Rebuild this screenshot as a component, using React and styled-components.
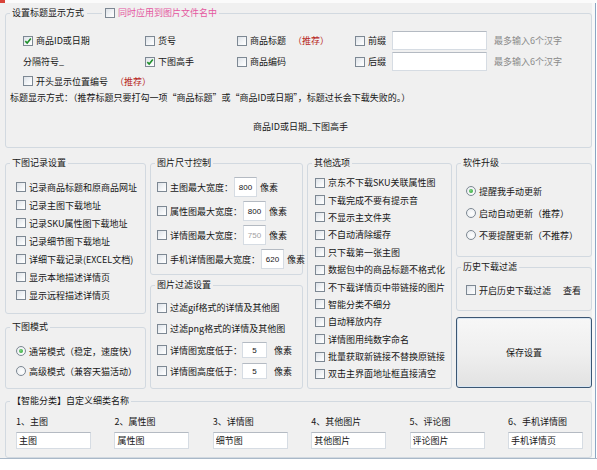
import styled, { createGlobalStyle } from "styled-components";

const GlobalStyle = createGlobalStyle`
  html, body {
    margin: 0;
    padding: 0;
    background: #fff;
  }
  body {
    font-family: "Noto Sans CJK SC", "Liberation Sans", sans-serif;
    font-size: 9px;
    color: #161616;
  }
  #root {
    width: 597px;
    height: 470px;
    overflow: hidden;
  }
`;

const Window = styled.div`
  width: 597px;
  height: 470px;
  display: flex;
  flex-direction: column;
  background: #fbfbfb;
`;

const TopBar = styled.div`
  height: 3px;
  flex: none;
  display: flex;

  span {
    width: 5px;
    background: #d9443a;
  }
`;

const Body = styled.div`
  flex: 1;
  display: flex;
  min-height: 0;
`;

const Main = styled.div`
  width: 592px;
  box-sizing: border-box;
  padding: 3px 0 0 5px;
  background: #f0f0f0;
  display: flex;
  flex-direction: column;
`;

const Edge = styled.div`
  width: 5px;
  box-sizing: border-box;
  background: #f8f8f8;
  border-right: 1px solid #fff;
  box-shadow: inset -1px 0 0 #8aa6c4;
`;

const Footer = styled.div`
  height: 12px;
  flex: none;
  background: #fff;
  border-top: 1px solid #a9b8c8;
  box-sizing: border-box;
`;

const Group = styled.fieldset`
  margin: ${(p) => p.$mt || 0}px 0 0 0;
  padding: 0;
  min-width: 0;
  box-sizing: border-box;
  height: ${(p) => p.$h}px;
  flex: none;
  border: 1px solid #d2d9e0;
  border-radius: 3px;
`;

const Legend = styled.legend`
  margin-left: 4px;
  padding: 0 2px;
  height: 14px;
  line-height: 14px;
  display: flex;
  align-items: center;
  white-space: nowrap;
`;

const LegendRule = styled.span`
  width: 15px;
  height: 1px;
  background: #d2d9e0;
  margin: 0 3px 0 3px;
`;

const Inner = styled.div`
  padding: ${(p) => p.$pad};
  display: flex;
  flex-direction: column;
`;

const Row = styled.div`
  height: ${(p) => p.$h}px;
  display: flex;
  align-items: center;
  padding-left: ${(p) => p.$indent || 0}px;
  white-space: nowrap;
`;

const Opt = styled.label`
  display: inline-flex;
  align-items: center;
  gap: 3px;
  flex: none;
  width: ${(p) => (p.$w ? `${p.$w}px` : "auto")};
  white-space: nowrap;
`;

const Cell = styled.span`
  flex: none;
  width: ${(p) => p.$w}px;
`;

const Box = styled.span`
  width: 10px;
  height: 10px;
  flex: none;
  box-sizing: border-box;
  border: 1px solid #7d8893;
  background: linear-gradient(135deg, #dde2e8 0%, #f4f6f8 60%, #ffffff 100%);
  display: inline-flex;
  align-items: center;
  justify-content: center;
`;

const RadioBox = styled(Box)`
  border-radius: 50%;
  background: radial-gradient(circle at 60% 60%, #ffffff 0%, #e4e8ec 100%);
`;

const Dot = styled.span`
  width: 4px;
  height: 4px;
  border-radius: 50%;
  background: radial-gradient(circle at 40% 40%, #7ed77e 0%, #1f9a2c 100%);
`;

function Check({ checked }) {
  return (
    <Box>
      {checked && (
        <svg width="8" height="8" viewBox="0 0 8 8">
          <path d="M1.3 4.1 L3.2 6 L6.8 1.6" fill="none" stroke="#1e8f2a" strokeWidth="1.6" />
        </svg>
      )}
    </Box>
  );
}

function Radio({ checked }) {
  return <RadioBox>{checked && <Dot />}</RadioBox>;
}

const Pink = styled.span`
  color: #e4579f;
`;

const Red = styled.span`
  color: #b8281f;
  margin-left: ${(p) => p.$ml || 0}px;
`;

const Hint = styled.span`
  color: #8a8a8a;
  margin-left: 7px;
`;

const Field = styled.input`
  width: ${(p) => p.$w}px;
  height: ${(p) => p.$h || 19}px;
  box-sizing: border-box;
  flex: none;
  margin: 0 0 0 ${(p) => p.$ml || 0}px;
  padding: 0 2px;
  border: 1px solid #d6dce3;
  border-top-color: #b4bac2;
  background: #fff;
  font-family: inherit;
  font-size: 9px;
  color: #161616;
  text-align: ${(p) => p.$align || "left"};
  outline: none;

  &:disabled {
    color: #a2a2a2;
  }
`;

const NumBox = styled(Field)`
  font-family: "Liberation Sans", sans-serif;
  font-size: 8px;
  padding: 0;
`;

const Unit = styled.span`
  margin-left: ${(p) => p.$ml || 3}px;
`;

const Desc = styled.div`
  height: 16px;
  line-height: 16px;
  white-space: nowrap;
`;

const Preview = styled.div`
  margin-top: 14px;
  line-height: 14px;
  text-align: center;
`;

const Columns = styled.div`
  display: grid;
  grid-template-columns: 141px 153px 145px 136px;
  column-gap: 4px;
  margin-top: 8px;
  height: 233px;
`;

const Col = styled.div`
  display: flex;
  flex-direction: column;
`;

const SaveButton = styled.button`
  margin-top: 6px;
  height: 71px;
  flex: none;
  box-sizing: border-box;
  border: 1px solid #3b5673;
  border-radius: 3px;
  box-shadow: inset 0 0 0 1px #d8e6f3;
  background: linear-gradient(#f7f7f7 0%, #efefef 50%, #e2e2e2 100%);
  font-family: inherit;
  font-size: 9px;
  color: #161616;
`;

const NameGrid = styled.div`
  display: grid;
  grid-template-columns: repeat(6, 98.4px);
`;

const NameCell = styled.div`
  display: flex;
  flex-direction: column;
  gap: 3px;

  span {
    line-height: 14px;
    height: 14px;
  }
`;

const Link = styled.span`
  margin-left: 12px;
`;

const recordItems = [
  "记录商品标题和原商品网址",
  "记录主图下载地址",
  "记录SKU属性图下载地址",
  "记录细节图下载地址",
  "详细下载记录(EXCEL文档)",
  "显示本地描述详情页",
  "显示远程描述详情页",
];

const otherItems = [
  "京东不下载SKU关联属性图",
  "下载完成不要有提示音",
  "不显示主文件夹",
  "不自动清除缓存",
  "只下载第一张主图",
  "数据包中的商品标题不格式化",
  "不下载详情页中带链接的图片",
  "智能分类不细分",
  "自动释放内存",
  "详情图用纯数字命名",
  "批量获取新链接不替换原链接",
  "双击主界面地址框直接清空",
];

const sizeRows = [
  { label: "主图最大宽度：", value: "800" },
  { label: "属性图最大宽度：", value: "800" },
  { label: "详情图最大宽度：", value: "750", disabled: true },
  { label: "手机详情图最大宽度：", value: "620" },
];

const names = [
  ["1、主图", "主图"],
  ["2、属性图", "属性图"],
  ["3、详情图", "细节图"],
  ["4、其他图片", "其他图片"],
  ["5、评论图", "评论图片"],
  ["6、手机详情图", "手机详情页"],
];

export default function App() {
  return (
    <Window>
      <GlobalStyle />
      <TopBar>
        <span />
      </TopBar>
      <Body>
        <Main>
          <Group $h={142}>
            <Legend>
              设置标题显示方式
              <LegendRule />
              <Opt>
                <Check />
                <Pink>同时应用到图片文件名中</Pink>
              </Opt>
            </Legend>
            <Inner $pad="10px 0 0 4px">
              <Row $h={21} $indent={13}>
                <Opt $w={122}>
                  <Check checked />
                  商品ID或日期
                </Opt>
                <Opt $w={92}>
                  <Check />
                  货号
                </Opt>
                <Opt $w={118}>
                  <Check />
                  商品标题
                  <Red $ml={4}>（推荐）</Red>
                </Opt>
                <Opt $w={37}>
                  <Check />
                  前缀
                </Opt>
                <Field $w={95} defaultValue="" />
                <Hint>最多输入6个汉字</Hint>
              </Row>
              <Row $h={21} $indent={13}>
                <Cell $w={122}>分隔符号_</Cell>
                <Opt $w={92}>
                  <Check checked />
                  下图高手
                </Opt>
                <Opt $w={118}>
                  <Check />
                  商品编码
                </Opt>
                <Opt $w={37}>
                  <Check />
                  后缀
                </Opt>
                <Field $w={95} defaultValue="" />
                <Hint>最多输入6个汉字</Hint>
              </Row>
              <Row $h={18} $indent={13}>
                <Opt>
                  <Check />
                  开头显示位置编号
                  <Red $ml={4}>（推荐）</Red>
                </Opt>
              </Row>
              <Desc>
                标题显示方式：（推荐标题只要打勾一项“商品标题”或“商品ID或日期”，标题过长会下载失败的。）
              </Desc>
              <Preview>商品ID或日期_下图高手</Preview>
            </Inner>
          </Group>

          <Columns>
            <Col>
              <Group $h={158}>
                <Legend>下图记录设置</Legend>
                <Inner $pad="8px 0 0 10px">
                  {recordItems.map((t) => (
                    <Row key={t} $h={18}>
                      <Opt>
                        <Check />
                        {t}
                      </Opt>
                    </Row>
                  ))}
                </Inner>
              </Group>
              <Group $h={69} $mt={6}>
                <Legend>下图模式</Legend>
                <Inner $pad="7px 0 0 10px">
                  <Row $h={20}>
                    <Opt>
                      <Radio checked />
                      通常模式（稳定，速度快）
                    </Opt>
                  </Row>
                  <Row $h={20}>
                    <Opt>
                      <Radio />
                      高级模式（兼容天猫活动）
                    </Opt>
                  </Row>
                </Inner>
              </Group>
            </Col>

            <Col>
              <Group $h={119}>
                <Legend>图片尺寸控制</Legend>
                <Inner $pad="5px 0 0 6px">
                  {sizeRows.map((r) => (
                    <Row key={r.label} $h={24}>
                      <Opt>
                        <Check />
                        {r.label}
                      </Opt>
                      <NumBox
                        $w={23}
                        $h={20}
                        $ml={1}
                        $align="center"
                        defaultValue={r.value}
                        disabled={r.disabled}
                      />
                      <Unit>像素</Unit>
                    </Row>
                  ))}
                </Inner>
              </Group>
              <Group $h={111} $mt={3}>
                <Legend>图片过滤设置</Legend>
                <Inner $pad="5px 0 0 6px">
                  <Row $h={21}>
                    <Opt>
                      <Check />
                      过滤gif格式的详情及其他图
                    </Opt>
                  </Row>
                  <Row $h={21}>
                    <Opt>
                      <Check />
                      过滤png格式的详情及其他图
                    </Opt>
                  </Row>
                  <Row $h={22}>
                    <Opt>
                      <Check />
                      详情图宽度低于：
                    </Opt>
                    <NumBox $w={25} $h={16} $align="center" defaultValue="5" />
                    <Unit $ml={7}>像素</Unit>
                  </Row>
                  <Row $h={20}>
                    <Opt>
                      <Check />
                      详情图高度低于：
                    </Opt>
                    <NumBox $w={25} $h={16} $align="center" defaultValue="5" />
                    <Unit $ml={7}>像素</Unit>
                  </Row>
                </Inner>
              </Group>
            </Col>

            <Col>
              <Group $h={233}>
                <Legend>其他选项</Legend>
                <Inner $pad="4px 0 0 7px">
                  {otherItems.map((t) => (
                    <Row key={t} $h={17.4}>
                      <Opt>
                        <Check />
                        {t}
                      </Opt>
                    </Row>
                  ))}
                </Inner>
              </Group>
            </Col>

            <Col>
              <Group $h={101}>
                <Legend>软件升级</Legend>
                <Inner $pad="10px 0 0 9px">
                  <Row $h={22}>
                    <Opt>
                      <Radio checked />
                      提醒我手动更新
                    </Opt>
                  </Row>
                  <Row $h={22}>
                    <Opt>
                      <Radio />
                      启动自动更新（推荐）
                    </Opt>
                  </Row>
                  <Row $h={22}>
                    <Opt>
                      <Radio />
                      不要提醒更新（不推荐）
                    </Opt>
                  </Row>
                </Inner>
              </Group>
              <Group $h={51} $mt={3}>
                <Legend>历史下载过滤</Legend>
                <Inner $pad="6px 0 0 9px">
                  <Row $h={20}>
                    <Opt>
                      <Check />
                      开启历史下载过滤
                    </Opt>
                    <Link>查看</Link>
                  </Row>
                </Inner>
              </Group>
              <SaveButton>保存设置</SaveButton>
            </Col>
          </Columns>

          <Group $h={64} $mt={5}>
            <Legend>【智能分类】自定义细类名称</Legend>
            <Inner $pad="7px 0 0 10px">
              <NameGrid>
                {names.map(([label, value]) => (
                  <NameCell key={label}>
                    <span>{label}</span>
                    <Field $w={75} $h={17} defaultValue={value} />
                  </NameCell>
                ))}
              </NameGrid>
            </Inner>
          </Group>
        </Main>
        <Edge />
      </Body>
      <Footer />
    </Window>
  );
}
